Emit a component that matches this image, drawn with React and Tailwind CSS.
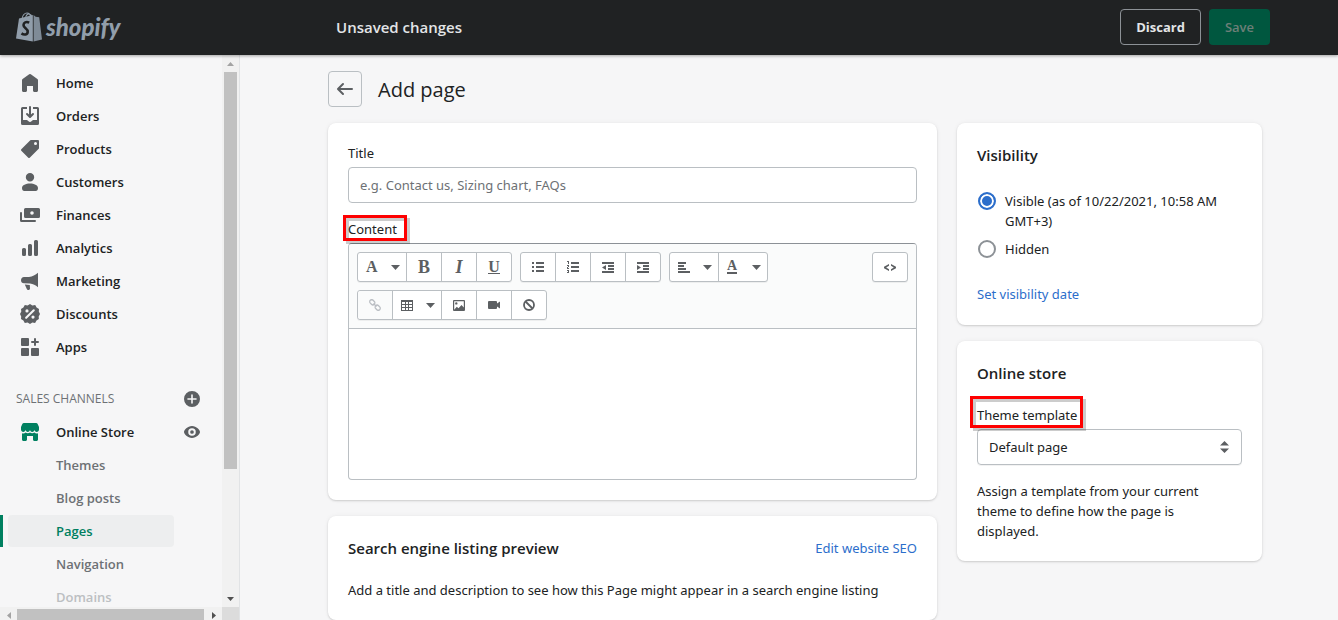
import React from "react";

const Icon = ({ children, className = "size-5", box = "0 0 20 20" }) => (
  <svg viewBox={box} className={`shrink-0 ${className}`} fill="currentColor" fillRule="evenodd" aria-hidden="true">
    {children}
  </svg>
);

const NAV = [
  ["Home", <path d="M18 7.261V17.5c0 .841-.672 1.5-1.5 1.5h-2c-.828 0-1.5-.659-1.5-1.5V13H7v4.477C7 18.318 6.328 19 5.5 19h-2c-.828 0-1.5-.682-1.5-1.523V7.261a1.5 1.5 0 01.615-1.21l6.59-4.82a1.481 1.481 0 011.59 0l6.59 4.82A1.5 1.5 0 0118 7.26z" />],
  ["Orders", <>
    <path d="M11 1a1 1 0 10-2 0v7.586L7.707 7.293a1 1 0 00-1.414 1.414l3 3a1 1 0 001.414 0l3-3a1 1 0 00-1.414-1.414L11 8.586V1z" />
    <path d="M3 14V3h4V1H2.5A1.5 1.5 0 001 2.5v15A1.5 1.5 0 002.5 19h15a1.5 1.5 0 001.5-1.5v-15A1.5 1.5 0 0017.5 1H13v2h4v11h-3.5c-.775 0-1.388.662-1.926 1.244l-.11.12A1.994 1.994 0 0110 16a1.994 1.994 0 01-1.463-.637l-.111-.12C7.888 14.664 7.275 14 6.5 14H3z" />
  </>],
  ["Products", <path d="M10.293 1.293A1 1 0 0111 1h7a1 1 0 011 1v7a1 1 0 01-.293.707l-9 9a1 1 0 01-1.414 0l-7-7a1 1 0 010-1.414l9-9zM15.5 6a1.5 1.5 0 100-3 1.5 1.5 0 000 3z" />],
  ["Customers", <path d="M14.2 5.2a4.2 4.2 0 11-8.4 0 4.2 4.2 0 018.4 0zM2 16c0-2.6 4-4.4 8-4.4s8 1.8 8 4.4c0 1.800-.9 3-2.300 3H4.300C2.900 19 2 17.800 2 16z" />],
  ["Finances", <>
    <path d="M5.500 3A1.500 1.500 0 004 4.500v7A1.500 1.500 0 005.500 13h13a1.500 1.500 0 001.500-1.500v-7A1.500 1.500 0 0018.500 3h-13zM12 9.800a1.800 1.800 0 100-3.600 1.800 1.800 0 000 3.600z" />
    <path d="M1 7a1 1 0 011 1v7h13a1 1 0 110 2H1.500A1.500 1.500 0 010 15.500V8a1 1 0 011-1z" />
  </>],
  ["Analytics", <path d="M15.500 2A1.500 1.500 0 0014 3.500v13a1.500 1.500 0 001.500 1.500h1a1.500 1.500 0 001.500-1.500v-13A1.500 1.500 0 0016.500 2h-1zM9.500 6A1.500 1.500 0 008 7.500v9A1.500 1.500 0 009.500 18h1a1.500 1.500 0 001.500-1.500v-9A1.500 1.500 0 0010.500 6h-1zM3.500 10A1.500 1.500 0 002 11.500v5A1.500 1.500 0 003.500 18h1A1.500 1.500 0 006 16.500v-5A1.500 1.500 0 004.500 10h-1z" />],
  ["Marketing", <path d="M18 1.800v14.400c-2.500-2-4.800-3.200-8-3.600L4 12.200C2.200 12.200 1 10.900 1 9.200s1.200-3.100 3-3.100h5C12.500 5.600 15.500 4.200 18 1.800zM4.800 13.500l5 .4.200 3.700c0 .8-.5 1.400-1.300 1.400h-.6c-.6 0-1.100-.4-1.300-.9z" />],
  ["Discounts", <path d="M10 0l2.400 1.500 2.800-.4 1.400 2.300 2.400 1.500-.2 2.700L20 10l-1.300 2.400.2 2.700-2.400 1.500-1.400 2.300-2.700-.4L10 20l-2.400-1.500-2.800.4-1.400-2.300L1 15.100l.2-2.700L0 10l1.300-2.400L1 4.900l2.400-1.500 1.400-2.300 2.800.4zM7 8.500a1.600 1.600 0 100-3.200 1.600 1.600 0 000 3.200zM13 14.700a1.600 1.600 0 100-3.200 1.600 1.600 0 000 3.200zM13 5.500L5.400 13a1 1 0 001.500 1.500L14.500 7A1 1 0 0013 5.500z" />],
  ["Apps", <path d="M2 1h6a1 1 0 011 1v6a1 1 0 01-1 1H2a1 1 0 01-1-1V2a1 1 0 011-1zM2 11h6a1 1 0 011 1v6a1 1 0 01-1 1H2a1 1 0 01-1-1v-6a1 1 0 011-1zM12 11h6a1 1 0 011 1v6a1 1 0 01-1 1h-6a1 1 0 01-1-1v-6a1 1 0 011-1zM15 1a1 1 0 00-1 1v2h-2a1 1 0 100 2h2v2a1 1 0 102 0V6h2a1 1 0 100-2h-2V2a1 1 0 00-1-1z" />],
];

function NavLink({ label, children }) {
  return (
    <a href="#" className="flex h-8 items-center gap-4 pl-5 font-semibold text-[#202223]">
      <span className="text-[#5c5f62]"><Icon>{children}</Icon></span>
      {label}
    </a>
  );
}

function SubLink({ label, active, faded }) {
  const tone = active ? "bg-[#edeeef] text-[#007f5f]" : faded ? "text-[#bcbfc2]" : "text-[#6d7175]";
  return (
    <li className={`flex border-l-[3px] ${active ? "border-[#008060]" : "border-transparent"}`}>
      <a href="#" className={`ml-[5px] mr-12 flex h-8 flex-1 items-center rounded pl-12 font-semibold ${tone}`}>{label}</a>
    </li>
  );
}

function Sidebar() {
  return (
    <aside className="flex w-60 shrink-0 flex-col border-r border-[#e1e3e5] bg-[#f6f6f7] font-['Open_Sans',sans-serif]">
      <div className="flex min-h-0 flex-1">
        <nav className="flex-1 overflow-hidden pt-3">
          <ul className="flex flex-col gap-px">
            {NAV.map(([label, icon]) => (
              <li key={label}><NavLink label={label}>{icon}</NavLink></li>
            ))}
          </ul>
          <div className="mt-5 flex h-8 items-center justify-between pl-4 pr-[22px] text-xs text-[#6d7175]">
            SALES CHANNELS
            <button aria-label="Add sales channel" className="text-[#5c5f62]">
              <Icon className="size-4"><path d="M10 0a10 10 0 100 20 10 10 0 000-20zM9 5a1 1 0 112 0v4h4a1 1 0 110 2h-4v4a1 1 0 11-2 0v-4H5a1 1 0 110-2h4z" /></Icon>
            </button>
          </div>
          <div className="mt-px flex items-center justify-between pr-[22px]">
            <a href="#" className="flex h-8 items-center gap-4 pl-5 font-semibold text-[#202223]">
              <Icon className="size-5 text-[#008060]">
                <path d="M4 1h12a2 2 0 011.800 1.200L19 5v2.500c0 1.400-1.100 2.500-2.300 2.500S14.500 9 14.500 7.800C14.500 9 13.500 10 12.200 10S10 9 10 7.800C10 9 9 10 7.800 10S5.500 9 5.500 7.800C5.500 9 4.500 10 3.300 10S1 8.900 1 7.500V5l1.200-2.800A2 2 0 014 1z" />
                <path d="M2 11.300c1.400.4 2.700.1 3.600-.7 1.300 1 3.100 1 4.400 0 1.300 1 3.100 1 4.400 0 .9.800 2.200 1.100 3.600.7v6.200c0 .8-.7 1.500-1.500 1.500h-2c-.8 0-1.500-.7-1.500-1.500V14H7v3.500c0 .8-.7 1.500-1.500 1.500h-2c-.8 0-1.500-.7-1.500-1.500z" />
              </Icon>
              Online Store
            </a>
            <button aria-label="View your online store" className="text-[#5c5f62]">
              <Icon className="size-4"><path d="M10 2.500C4.400 2.500 0 7.600 0 10s4.400 7.500 10 7.500S20 12.400 20 10 15.600 2.500 10 2.500zm0 12.200a4.700 4.700 0 110-9.400 4.700 4.700 0 010 9.400zM10 12.300a2.300 2.300 0 100-4.600 2.300 2.300 0 000 4.600z" /></Icon>
            </button>
          </div>
          <ul className="mt-px flex flex-col gap-px">
            <SubLink label="Themes" />
            <SubLink label="Blog posts" />
            <SubLink label="Pages" active />
            <SubLink label="Navigation" />
            <SubLink label="Domains" faded />
          </ul>
        </nav>
        <div className="flex w-[17px] flex-col items-center justify-between bg-[#f1f1f1] text-[#505050]">
          <div className="flex w-full flex-1 flex-col items-center">
            <div className="flex h-[17px] items-center text-[#a3a3a3]"><Icon className="h-1 w-[7px]" box="0 0 7 4"><path d="M3.500 0L7 4H0z" /></Icon></div>
            <div className="h-[397px] w-[13px] bg-[#c1c1c1]" />
          </div>
          <div className="flex h-[17px] items-center"><Icon className="h-1 w-[7px]" box="0 0 7 4"><path d="M3.500 4L7 0H0z" /></Icon></div>
        </div>
      </div>
      <div className="flex h-[13px] bg-[#f1f1f1] text-[#505050]">
        <div className="flex w-[17px] items-center justify-center pt-1 text-[#a3a3a3]"><Icon className="h-[7px] w-1" box="0 0 4 7"><path d="M0 3.500L4 0v7z" /></Icon></div>
        <div className="mr-px mt-0.5 flex-1 bg-[#c1c1c1]" />
        <div className="flex w-[17px] items-center justify-center pt-1"><Icon className="h-[7px] w-1" box="0 0 4 7"><path d="M4 3.500L0 0v7z" /></Icon></div>
        <div className="w-[17px] bg-[#dcdcdc]" />
      </div>
    </aside>
  );
}

const Caret = () => <Icon className="h-[5px] w-[9px]" box="0 0 9 5"><path d="M0 0h9L4.500 5z" /></Icon>;

function Group({ children }) {
  return (
    <div className="flex h-[30px] divide-x divide-[#babfc3] rounded-[3px] border border-[#babfc3] bg-white text-[#5c5f62] shadow-[0_1px_0_rgba(0,0,0,0.05)]">
      {children}
    </div>
  );
}

function Tool({ label, wide, children, disabled }) {
  return (
    <button
      aria-label={label}
      disabled={disabled}
      className={`flex h-7 items-center ${wide ? "w-[49px] justify-between pl-2 pr-1.5 last:w-12" : "w-[35px] justify-center last:w-[34px]"} ${disabled ? "rounded-l-[3px] bg-[#fafbfb] text-[#babec3]" : ""}`}
    >
      {children}
      {wide && <Caret />}
    </button>
  );
}

function Toolbar() {
  return (
    <div className="flex items-start justify-between rounded-t-[3px] border-b border-[#babfc3] bg-[#fafbfb] p-2">
      <div className="flex flex-col items-start gap-2">
        <div className="flex gap-2">
          <Group>
            <Tool label="Formatting" wide><span className="font-['Liberation_Serif',serif] text-base leading-5 font-bold">A</span></Tool>
            <Tool label="Bold"><span className="font-['Liberation_Serif',serif] text-lg leading-5 font-bold">B</span></Tool>
            <Tool label="Italic"><span className="font-['Liberation_Serif',serif] text-lg leading-5 font-bold italic">I</span></Tool>
            <Tool label="Underline"><span className="border-b border-current font-['Liberation_Serif',serif] text-base leading-3 font-bold">U</span></Tool>
          </Group>
          <Group>
            <Tool label="Bulleted list"><Icon className="h-[11px] w-3" box="0 0 12 11"><path d="M0 0h2v2H0zM4 0h8v2H4zM0 4h2v2H0zM4 4h8v2H4zM0 8h2v2H0zM4 8h8v2H4z" /></Icon></Tool>
            <Tool label="Numbered list"><Icon className="h-3 w-3" box="0 0 12 12"><path d="M4 1h8v2H4zM4 5h8v2H4zM4 9h8v2H4zM0 0h2v3H1V1H0zM0 4h2v2H1v1h1v1H0V6h1V5H0zM0 9h2v3H0v-1h1v-1H0z" /></Icon></Tool>
            <Tool label="Outdent"><Icon className="h-[11px] w-3" box="0 0 12 11"><path d="M0 0h12v2H0zM6 3h6v2H6zM6 6h6v2H6zM0 9h12v2H0zM0 5.500L4 3v5z" /></Icon></Tool>
            <Tool label="Indent"><Icon className="h-[11px] w-3" box="0 0 12 11"><path d="M0 0h12v2H0zM6 3h6v2H6zM6 6h6v2H6zM0 9h12v2H0zM4 5.500L0 3v5z" /></Icon></Tool>
          </Group>
          <Group>
            <Tool label="Alignment" wide><Icon className="h-[11px] w-3" box="0 0 12 11"><path d="M0 0h8v2H0zM0 3h6v2H0zM0 6h8v2H0zM0 9h12v2H0z" /></Icon></Tool>
            <Tool label="Color" wide><span className="border-b-2 border-current font-['Liberation_Serif',serif] text-sm leading-3 font-bold">A</span></Tool>
          </Group>
        </div>
        <Group>
          <Tool label="Insert link" disabled>
            <Icon className="h-3 w-3" box="0 0 12 12">
              <g fill="none" stroke="currentColor" strokeWidth="1.300">
                <rect x="-2" y="-2.800" width="4" height="5.600" rx="2" transform="translate(3.300 3.300) rotate(-45)" />
                <rect x="-2" y="-2.800" width="4" height="5.600" rx="2" transform="translate(8.700 8.700) rotate(-45)" />
                <path d="M4.500 4.500l3 3" />
              </g>
            </Icon>
          </Tool>
          <Tool label="Insert table" wide><Icon className="h-[11px] w-3" box="0 0 12 11"><path d="M0 0h12v11H0zM1 2v2h3V2zM5 2v2h2V2zM8 2v2h3V2zM1 5v2h3V5zM5 5v2h2V5zM8 5v2h3V5zM1 8v2h3V8zM5 8v2h2V8zM8 8v2h3V8z" /></Icon></Tool>
          <Tool label="Insert image"><Icon className="h-[11px] w-3" box="0 0 12 11"><path d="M1 0h10a1 1 0 011 1v9a1 1 0 01-1 1H1a1 1 0 01-1-1V1a1 1 0 011-1zM1.200 1.200v8.600l2.600-3 1.700 1.500L8.500 5l2.300 2.500V1.200zM3.300 2.200a1.200 1.200 0 110 2.400 1.200 1.200 0 010-2.400z" /></Icon></Tool>
          <Tool label="Insert video"><Icon className="h-2 w-3" box="0 0 12 8"><path d="M1 0h7a1 1 0 011 1v1.500L12 .5v7l-3-2V7a1 1 0 01-1 1H1a1 1 0 01-1-1V1a1 1 0 011-1z" /></Icon></Tool>
          <Tool label="Clear formatting"><Icon className="h-3 w-3" box="0 0 12 12"><g fill="none" stroke="currentColor" strokeWidth="1.800"><circle cx="6" cy="6" r="5" /><path d="M2.500 2.500l7 7" /></g></Icon></Tool>
        </Group>
      </div>
      <button aria-label="Show HTML" className="flex h-[30px] w-9 items-center justify-center rounded-[3px] border border-[#babfc3] bg-white text-[#5c5f62] shadow-[0_1px_0_rgba(0,0,0,0.05)]">
        <Icon className="h-[7px] w-3" box="0 0 12 7"><path d="M5 0v1.700L2.200 3.500 5 5.300V7L0 4.200V2.800zM7 0v1.700l2.800 1.800L7 5.300V7l5-2.800V2.800z" /></Icon>
      </button>
    </div>
  );
}

const card = "rounded-lg bg-white p-5 shadow-[0_0_5px_rgba(23,24,24,0.05),0_1px_2px_rgba(0,0,0,0.15)]";
const heading = "font-['Open_Sans',sans-serif] text-[15px] leading-6 font-semibold";
const marker = "pointer-events-none absolute border-[3px] border-[#fe0000] drop-shadow-[3px_3px_0_rgba(0,0,0,0.2)]";

export default function App() {
  return (
    <div className="flex h-screen flex-col overflow-hidden bg-[#f6f6f7] font-['Noto_Sans','Open_Sans',sans-serif] text-[13px] leading-5 text-[#202223]">
      <header className="z-10 flex h-[55px] shrink-0 items-center bg-[#202223] pb-px font-['Open_Sans',sans-serif] shadow-[0_1px_3px_rgba(0,0,0,0.35)]">
        <a href="#" aria-label="Shopify" className="flex w-60 items-center gap-1 pl-4 text-[#919eab]">
          <Icon className="h-[30px] w-[26px]" box="0 0 26 30">
            <path d="M3 6.500L16.800 3V29.500L0 26.400z" />
            <path d="M17.600 2.900l2 1.900 3.600.4L26 27.600l-8.400 1.900z" opacity="0.85" />
            <path d="M6 7C6.500 3.500 8.700 1 11 1c2.200 0 3.300 1.600 3.600 4M9.500 6C10 3.500 11.600 1.800 13.300 2c1.500.2 2.200 1.300 2.500 2.500" fill="none" stroke="currentColor" strokeWidth="1.100" />
            <path d="M13.200 10.600C10.200 9.200 7.600 10.500 7.500 13c-.1 3.200 4.400 3.400 4.200 6.800-.2 2.800-3.400 3.700-6.200 1.600" fill="none" stroke="#202223" strokeWidth="2.600" />
          </Icon>
          <span className="font-[Lato,sans-serif] text-2xl font-black italic">shopify</span>
        </a>
        <div className="flex flex-1 items-center justify-between pl-24 pr-[68px]">
          <h2 className="text-[15px] font-semibold text-[#e3e5e7]">Unsaved changes</h2>
          <div className="flex gap-2">
            <button className="h-9 rounded border border-[#8c9196] px-[15px] font-bold text-[#e3e5e7]">Discard</button>
            <button disabled className="h-9 rounded bg-[#00573f] px-4 font-semibold text-[#6d7f78]">Save</button>
          </div>
        </div>
      </header>

      <div className="flex min-h-0 flex-1">
        <Sidebar />
        <main className="min-w-0 flex-1 pl-[88px] pr-[76px] pt-4">
          <div className="flex items-center gap-4">
            <button aria-label="Back" className="flex h-9 w-[34px] items-center justify-center rounded border border-[#babfc3] text-[#5c5f62]">
              <Icon className="size-5"><path d="M17 9H5.414l3.293-3.293a.999.999 0 10-1.414-1.414l-5 5a.999.999 0 000 1.414l5 5a.997.997 0 001.414 0 .999.999 0 000-1.414L5.414 11H17a1 1 0 100-2z" /></Icon>
            </button>
            <h1 className="pt-0.5 font-['Open_Sans',sans-serif] text-xl font-medium">Add page</h1>
          </div>

          <div className="mt-4 flex items-start gap-5">
            <div className="flex min-w-0 flex-1 flex-col gap-4">
              <section className={card}>
                <label htmlFor="title" className="block">Title</label>
                <input id="title" placeholder="e.g. Contact us, Sizing chart, FAQs" className="mt-1 block h-9 w-full rounded border border-[#babfc3] px-[11px] placeholder:text-[#6d7175]" />
                <label htmlFor="content" className="relative mt-4 block w-fit">
                  Content
                  <span className={`${marker} -left-[5px] -top-1 h-[26px] w-16`} />
                </label>
                <div className="mt-1 rounded border border-[#babfc3] border-t-[#8c9196]">
                  <Toolbar />
                  <textarea id="content" className="block h-[150px] w-full resize-none p-3" />
                </div>
              </section>
              <section className={card}>
                <div className="flex items-center justify-between">
                  <h2 className={heading}>Search engine listing preview</h2>
                  <a href="#" className="text-[#2c6ecb]">Edit website SEO</a>
                </div>
                <p className="mt-5">Add a title and description to see how this Page might appear in a search engine listing</p>
              </section>
            </div>

            <div className="flex w-[305px] shrink-0 flex-col gap-4">
              <section className={card}>
                <h2 className={heading}>Visibility</h2>
                <fieldset className="mt-6 flex flex-col gap-2">
                  {["Visible (as of 10/22/2021, 10:58 AM GMT+3)", "Hidden"].map((text, i) => (
                    <label key={text} className="flex items-start gap-[9px] pl-px">
                      <input type="radio" name="visibility" defaultChecked={i === 0} className="mt-px size-[18px] shrink-0 appearance-none rounded-full border-2 border-[#8c9196] checked:border-[#2c6ecb] checked:bg-[#2c6ecb] checked:shadow-[inset_0_0_0_2px_white]" />
                      {text}
                    </label>
                  ))}
                </fieldset>
                <a href="#" className="mt-[25px] block pb-px text-[#2c6ecb]">Set visibility date</a>
              </section>
              <section className={card}>
                <h2 className={heading}>Online store</h2>
                <label htmlFor="template" className="relative mt-5 block w-fit">
                  Theme template
                  <span className={`${marker} -left-[7px] -top-[9px] h-8 w-[113px]`} />
                </label>
                <div className="mt-1 flex items-center rounded border border-[#babfc3] pr-3 shadow-[0_1px_0_rgba(0,0,0,0.05)]">
                  <select id="template" className="h-[34px] flex-1 appearance-none px-[11px]">
                    <option>Default page</option>
                  </select>
                  <Icon className="h-3 w-[9px] text-[#5c5f62]" box="0 0 9 12"><path d="M4.500 0L9 4.500H0zM4.500 12L0 7.500h9z" /></Icon>
                </div>
                <p className="mt-4 pr-8">Assign a template from your current theme to define how the page is displayed.</p>
              </section>
            </div>
          </div>
        </main>
      </div>
    </div>
  );
}
